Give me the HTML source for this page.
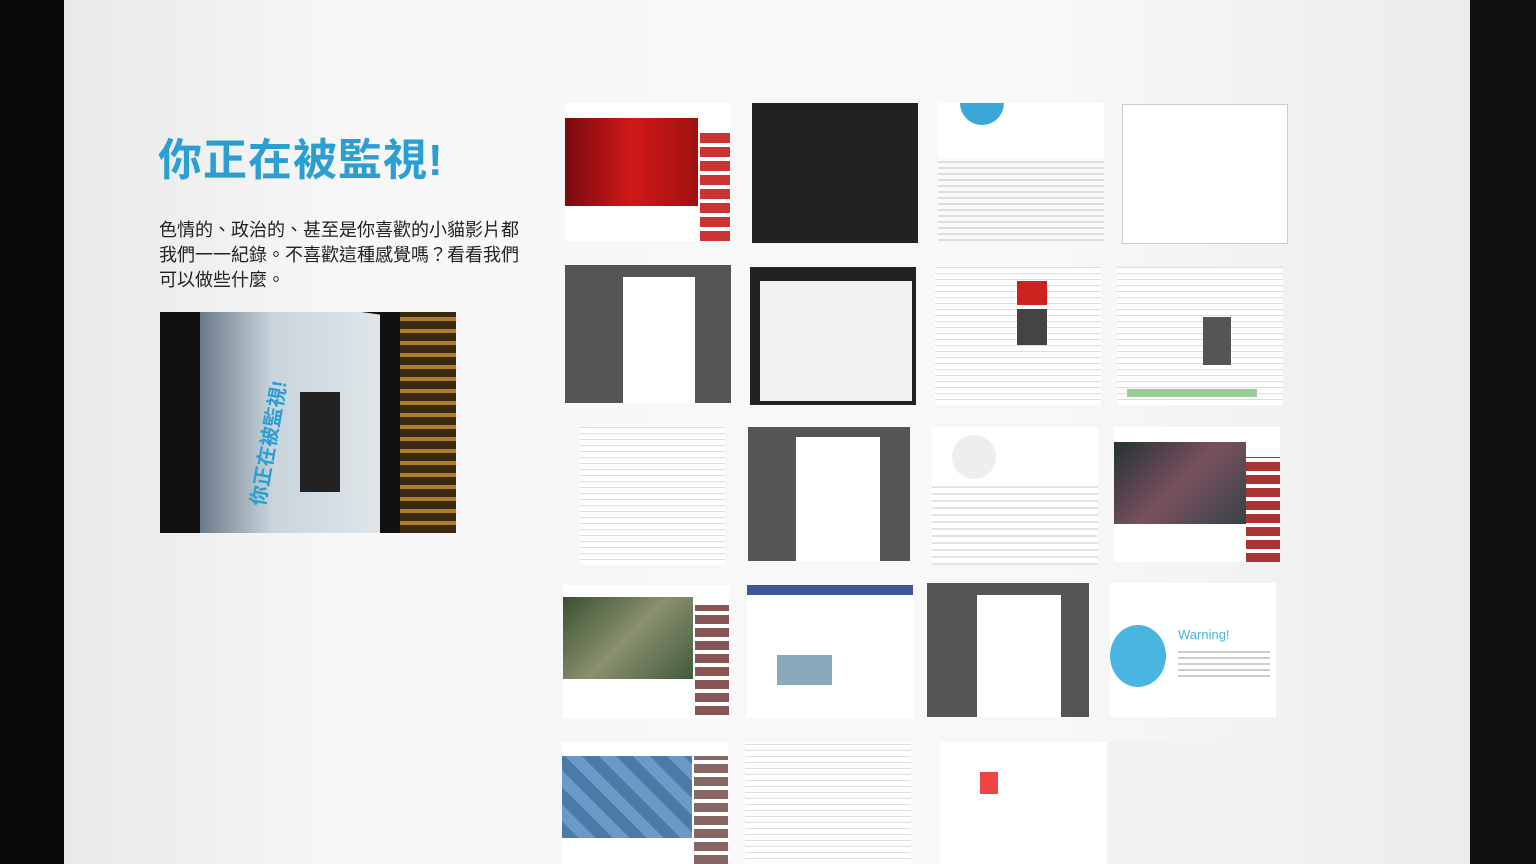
<!DOCTYPE html>
<html><head><meta charset="utf-8"><style>
*{margin:0;padding:0;box-sizing:border-box}
body{width:1536px;height:864px;overflow:hidden;background:#0a0a0a;position:relative;font-family:"Liberation Sans","Noto Sans CJK TC",sans-serif}
.screen{position:absolute;left:64px;top:0;width:1406px;height:864px;background:linear-gradient(90deg,#e9e9ea 0%,#f7f7f7 20%,#f8f8f8 70%,#ececec 100%)}
.bezel{position:absolute;left:1470px;top:0;width:66px;height:864px;background:#111}
h1{position:absolute;left:158px;top:124px;font-size:44px;color:#2b9fd2;font-weight:700;letter-spacing:1px}
p{position:absolute;left:159px;top:218px;width:400px;font-size:18px;line-height:25px;color:#222;white-space:nowrap}
.photo{position:absolute;left:160px;top:312px;width:296px;height:221px;background:#111;overflow:hidden}
.photo .s{position:absolute;left:40px;top:-10px;width:180px;height:250px;background:linear-gradient(90deg,#6a7a88,#c9d4dc 40%,#dfe6ea);transform:skewY(8deg)}
.photo .k{position:absolute;left:240px;top:0;width:56px;height:221px;background:repeating-linear-gradient(0deg,#3a2a10 0 8px,#b07a30 8px 12px)}
.photo .t{position:absolute;left:30px;top:100px;width:160px;color:#2b9fd2;font-size:20px;font-weight:700;transform:rotate(-80deg);white-space:nowrap}
.photo .m{position:absolute;left:140px;top:80px;width:40px;height:100px;background:#222}
.th{position:absolute;width:166px;height:138px;background:#fff;overflow:hidden}
.tx{background:#fff repeating-linear-gradient(0deg,transparent 0 5px,#ddd 5px 6px)}
.dk{background:#222}
.gr{background:#555}
.th i{position:absolute;display:block}
</style></head><body>
<div class="screen"></div><div class="bezel"></div>
<h1>你正在被監視!</h1>
<p>色情的、政治的、甚至是你喜歡的小貓影片都<br>我們一一紀錄。不喜歡這種感覺嗎？看看我們<br>可以做些什麼。</p>
<div class="photo"><div class="s"></div><div class="k"></div><div class="t">你正在被監視!</div><div class="m"></div></div>

<div class="th" style="left:565px;top:103px"><i style="left:0;top:15px;width:133px;height:88px;background:linear-gradient(90deg,#7a0a10,#d01818,#a01010)"></i><i style="left:135px;top:30px;width:30px;height:108px;background:repeating-linear-gradient(0deg,#c33 0 10px,#fff 10px 14px)"></i></div>
<div class="th dk" style="left:752px;top:103px;height:140px"></div>
<div class="th" style="left:938px;top:103px"><i style="left:22px;top:0;width:44px;height:22px;border-radius:0 0 22px 22px;background:#3aa7d8"></i><i style="left:0;top:55px;width:166px;height:83px;background:repeating-linear-gradient(0deg,#ddd 0 2px,#fafafa 2px 6px)"></i></div>
<div class="th" style="left:1122px;top:104px;height:140px;border:1px solid #ccc"></div>

<div class="th gr" style="left:565px;top:265px"><i style="left:58px;top:12px;width:72px;height:126px;background:#fff"></i></div>
<div class="th dk" style="left:750px;top:267px"><i style="left:10px;top:14px;width:152px;height:120px;background:#f2f2f2"></i></div>
<div class="th tx" style="left:935px;top:267px"><i style="left:82px;top:14px;width:30px;height:24px;background:#c22"></i><i style="left:82px;top:42px;width:30px;height:36px;background:#444"></i></div>
<div class="th tx" style="left:1117px;top:267px"><i style="left:86px;top:50px;width:28px;height:48px;background:#555"></i><i style="left:10px;top:122px;width:130px;height:8px;background:#9c9"></i></div>

<div class="th tx" style="left:580px;top:427px;width:145px"></div>
<div class="th gr" style="left:748px;top:427px;width:162px;height:134px"><i style="left:48px;top:10px;width:84px;height:124px;background:#fff"></i></div>
<div class="th" style="left:932px;top:427px"><i style="left:20px;top:8px;width:44px;height:44px;border-radius:50%;background:#eee"></i><i style="left:0;top:55px;width:166px;height:83px;background:repeating-linear-gradient(0deg,#e2e2e2 0 2px,#fff 2px 7px)"></i></div>
<div class="th" style="left:1114px;top:427px;height:135px"><i style="left:0;top:15px;width:132px;height:82px;background:linear-gradient(135deg,#233,#7a5060,#344)"></i><i style="left:132px;top:30px;width:34px;height:105px;background:repeating-linear-gradient(0deg,#a33 0 9px,#fff 9px 13px)"></i></div>

<div class="th" style="left:563px;top:585px;height:133px"><i style="left:0;top:12px;width:130px;height:82px;background:linear-gradient(135deg,#3a5030,#8a9070,#405a3a)"></i><i style="left:132px;top:20px;width:34px;height:110px;background:repeating-linear-gradient(0deg,#855 0 9px,#fff 9px 13px)"></i></div>
<div class="th" style="left:747px;top:585px;height:133px"><i style="left:0;top:0;width:166px;height:10px;background:#3b5998"></i><i style="left:30px;top:70px;width:55px;height:30px;background:#8ab"></i></div>
<div class="th gr" style="left:927px;top:583px;width:162px;height:134px"><i style="left:50px;top:12px;width:84px;height:122px;background:#fff"></i></div>
<div class="th" style="left:1110px;top:583px;height:134px"><i style="left:0;top:42px;width:56px;height:62px;border-radius:50%;background:#4ab5e0"></i><i style="left:68px;top:44px;font-style:normal;color:#4ab5e0;font-size:13px">Warning!</i><i style="left:68px;top:64px;width:92px;height:30px;background:repeating-linear-gradient(0deg,#ccc 0 2px,#fff 2px 6px)"></i></div>

<div class="th" style="left:562px;top:742px;height:122px"><i style="left:0;top:14px;width:130px;height:82px;background:repeating-linear-gradient(45deg,#4a7aa8 0 12px,#6a9ac8 12px 24px)"></i><i style="left:132px;top:14px;width:34px;height:108px;background:repeating-linear-gradient(0deg,#866 0 9px,#fff 9px 13px)"></i></div>
<div class="th tx" style="left:745px;top:742px;height:122px"></div>
<div class="th" style="left:940px;top:742px;height:122px"><i style="left:40px;top:30px;width:18px;height:22px;background:#e44"></i></div>
<div class="th" style="left:1108px;top:742px;height:122px;background:#f2f2f2"></div>
</body></html>
